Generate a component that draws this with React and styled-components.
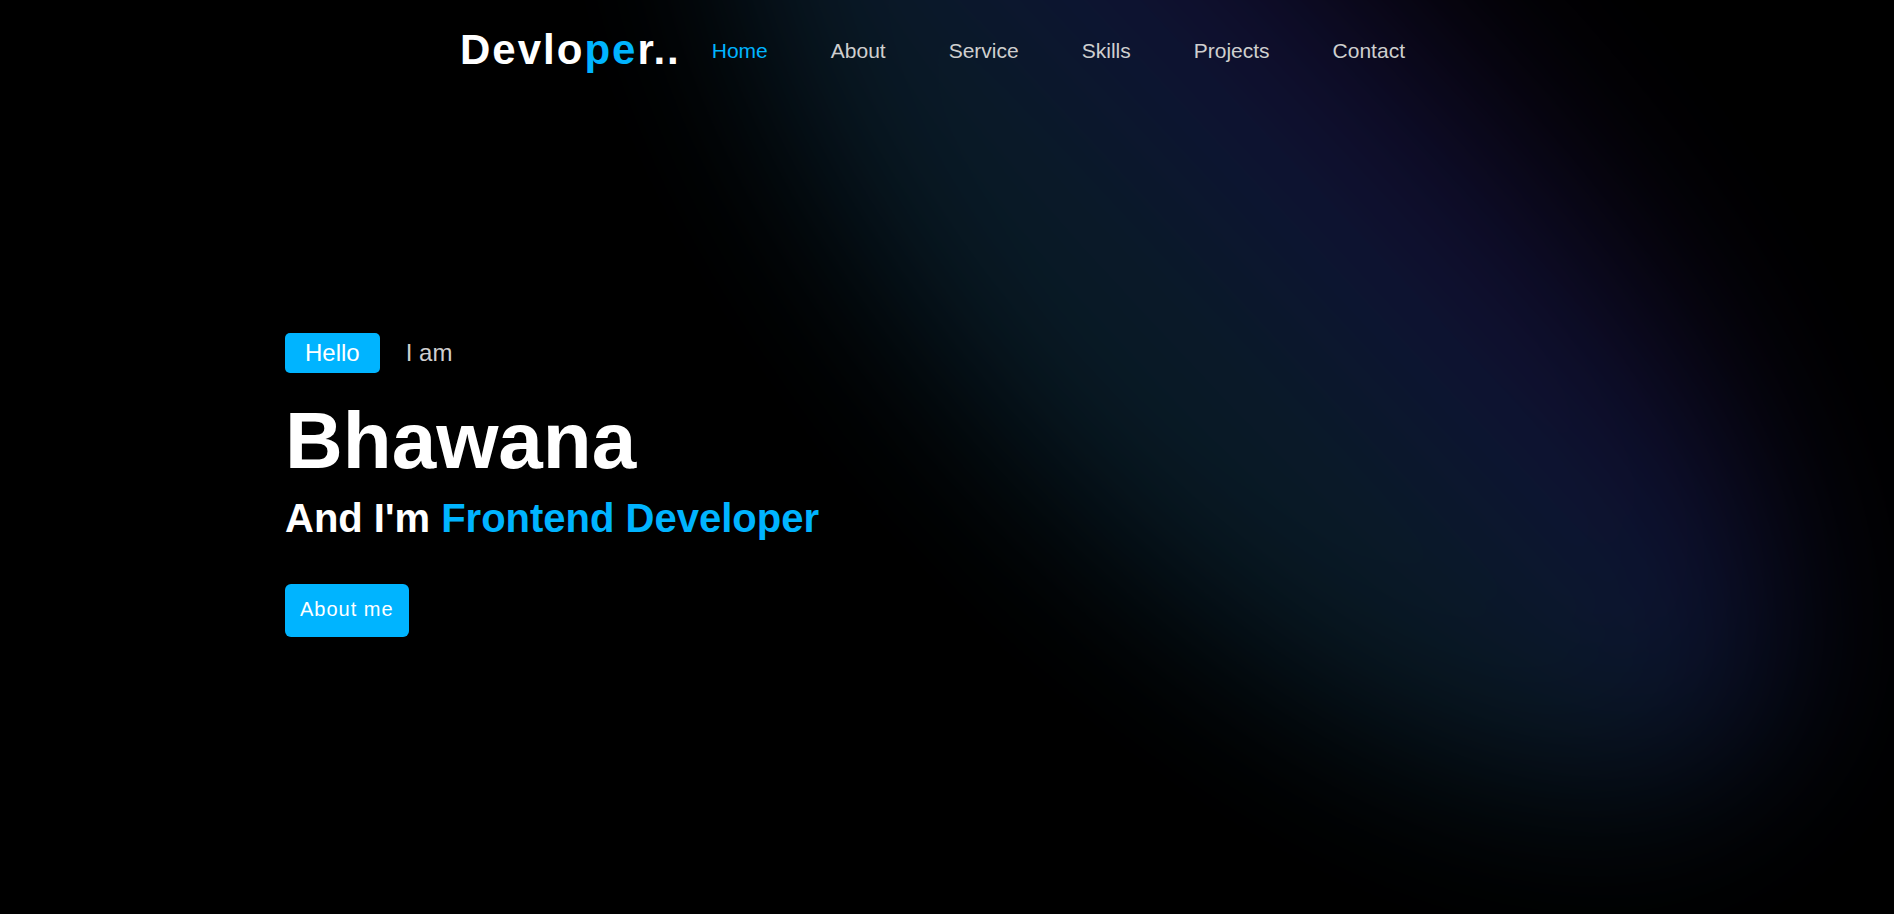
import React from "react"
import styled, { createGlobalStyle } from "styled-components"

const blue = "#00b4ff"

const GlobalStyle = createGlobalStyle`
  * { box-sizing: border-box; }
  body {
    margin: 0;
    background: #000;
    font-family: "Liberation Sans", Arial, sans-serif;
  }
`

const Page = styled.div`
  position: relative;
  min-height: 100vh;
  overflow: hidden;
  background: #000;
`

// soft diagonal light behind everything
const Glow = styled.div`
  position: absolute;
  left: 940px;
  top: -470px;
  width: 620px;
  height: 1420px;
  border-radius: 50%;
  transform: rotate(-43deg);
  background: linear-gradient(90deg, #0c2a3a 0%, #0f2538 40%, #152055 58%, #170f36 85%, #0c0618 100%);
  filter: blur(85px);
  opacity: 0.68;
  z-index: 0;
  pointer-events: none;
`

const Header = styled.header`
  position: relative;
  z-index: 1;
  display: flex;
  align-items: center;
  height: 100px;
  padding-left: 460px;
`

const Logo = styled.div`
  font-size: 42px;
  font-weight: 700;
  letter-spacing: 2px;
  color: #fff;
  line-height: normal;
`

const Accent = styled.span`
  color: ${blue};
`

const Nav = styled.nav`
  display: flex;
  gap: 63px;
  margin-left: 31px;
  padding-top: 2px;
`

const NavLink = styled.a`
  font-size: 21px;
  text-decoration: none;
  color: ${(p) => (p.$active ? blue : "#cfcfcf")};
  cursor: pointer;
`

const Hero = styled.section`
  position: relative;
  z-index: 1;
  padding: 233px 0 0 285px;
`

const HelloRow = styled.div`
  display: flex;
  align-items: center;
  gap: 26px;
`

const Badge = styled.span`
  background: ${blue};
  color: #fff;
  font-size: 24px;
  line-height: 28px;
  padding: 6px 20px;
  border-radius: 5px;
`

const Intro = styled.span`
  color: #cfcfcf;
  font-size: 24px;
`

const Name = styled.h1`
  margin: 28px 0 0;
  font-size: 80px;
  line-height: 1;
  font-weight: 700;
  color: #fff;
`

const Role = styled.h2`
  margin: 13px 0 0;
  font-size: 40px;
  line-height: 48px;
  font-weight: 700;
  color: #fff;
`

const Button = styled.button`
  margin-top: 42px;
  background: ${blue};
  color: #fff;
  border: none;
  border-radius: 6px;
  font-family: inherit;
  font-size: 20px;
  line-height: 27px;
  letter-spacing: 1px;
  padding: 12px 15px 14px;
  cursor: pointer;
`

const links = ["Home", "About", "Service", "Skills", "Projects", "Contact"]

export default function App() {
  return (
    <Page>
      <GlobalStyle />
      <Glow />
      <Header>
        <Logo>
          Devlo<Accent>pe</Accent>r..
        </Logo>
        <Nav>
          {links.map((l, i) => (
            <NavLink key={l} $active={i === 0}>
              {l}
            </NavLink>
          ))}
        </Nav>
      </Header>
      <Hero>
        <HelloRow>
          <Badge>Hello</Badge>
          <Intro>I am</Intro>
        </HelloRow>
        <Name>Bhawana</Name>
        <Role>
          And I'm <Accent>Frontend Developer</Accent>
        </Role>
        <Button>About me</Button>
      </Hero>
    </Page>
  )
}
